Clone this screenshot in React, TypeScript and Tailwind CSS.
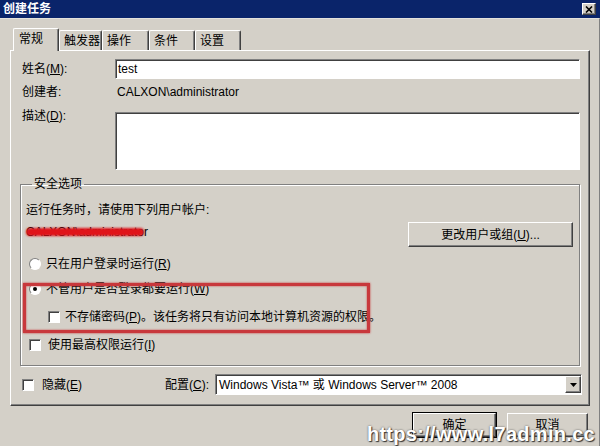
import React from "react"

// classic win2k 3d borders
const raised =
  "border border-t-white border-l-white border-r-[#404040] border-b-[#404040] shadow-[inset_-1px_-1px_#808080]"
const sunken =
  "border border-t-[#808080] border-l-[#808080] border-r-white border-b-white shadow-[inset_1px_1px_#404040]"

const tabs = [
  { label: "常规", w: "w-[46px]", active: true },
  { label: "触发器", w: "w-[43px]" },
  { label: "操作", w: "w-[47px]" },
  { label: "条件", w: "w-[46px]" },
  { label: "设置", w: "w-[46px]" },
]

const Check = () => <span className={`h-[12px] w-[12px] shrink-0 bg-white ${sunken}`} />

const Radio = ({ on }: { on?: boolean }) => (
  <span className="flex h-[12px] w-[12px] shrink-0 items-center justify-center rounded-full border border-t-[#808080] border-l-[#808080] border-r-white border-b-white bg-white">
    {on && <span className="h-[4px] w-[4px] rounded-full bg-black" />}
  </span>
)

const TitleBar = () => (
  <div className="flex h-[18px] w-full shrink-0 items-center justify-between bg-[#0a246a] pl-[3px] pr-[4px]">
    <span className="text-[12px] font-bold text-white">创建任务</span>
    <span className={`flex h-[12px] w-[14px] items-center justify-center bg-[#d4d0c8] ${raised}`}>
      <svg width="8" height="7" viewBox="0 0 8 7">
        <path d="M1 0.5 L7 6.5 M7 0.5 L1 6.5" stroke="#000" strokeWidth="1.6" />
      </svg>
    </span>
  </div>
)

const Tabs = () => (
  <div className="flex h-[31px] shrink-0 items-end pl-[13px]">
    {tabs.map((t) => (
      <div
        key={t.label}
        className={`${t.w} flex items-center whitespace-nowrap rounded-t-[2px] border border-b-0 border-t-white border-l-white border-r-[#404040] bg-[#d4d0c8] pl-[4px] shadow-[inset_-1px_0_#808080] ${
          t.active ? "relative z-10 -mb-px h-[23px] pb-[2px] pl-[5px]" : "h-[20px]"
        }`}
      >
        {t.label}
      </div>
    ))}
  </div>
)

const Panel = () => (
  <div className={`mx-[10px] flex h-[356px] w-[580px] flex-col pl-[11px] ${raised}`}>
    <div className="mt-[8px] flex items-center">
      <span className="w-[93px]">
        姓名(<u>M</u>):
      </span>
      <div className={`flex h-[20px] w-[465px] items-center bg-white pl-[2px] ${sunken}`}>test</div>
    </div>
    <div className="mt-[3px] flex h-[20px] items-center">
      <span className="w-[95px]">创建者:</span>
      <span>CALXON\administrator</span>
    </div>
    <div className="mt-[10px] flex items-start">
      <span className="-mt-[4px] w-[93px]">
        描述(<u>D</u>):
      </span>
      <div className={`h-[58px] w-[465px] bg-white ${sunken}`} />
    </div>

    <fieldset className="mt-[6px] -ml-[2px] h-[190px] w-[560px] border border-[#808080] pl-[5px] pr-[6px] shadow-[inset_1px_1px_white,1px_1px_white]">
      <legend className="ml-[6px] px-[2px]">安全选项</legend>
      <div className="mt-[10px]">运行任务时，请使用下列用户帐户:</div>
      <div className="mt-[4px] flex items-start justify-between">
        <span className="relative mt-[2px]">
          CALXON\administrator
          <span className="absolute left-[0px] top-[4px] h-[8px] w-[118px] rounded-full bg-[#e0141a] blur-[0.8px]" />
        </span>
        <button className={`h-[25px] w-[165px] bg-[#d4d0c8] ${raised}`}>
          更改用户或组(<u>U</u>)...
        </button>
      </div>
      <div className="mt-[9px] flex items-center gap-[5px] pl-[3px]">
        <Radio />
        <span>只在用户登录时运行(<u>R</u>)</span>
      </div>
      <div className="relative">
        <div className="pointer-events-none absolute -left-[3px] top-[2px] h-[50px] w-[347px] border-[3px] border-[#c8383c] shadow-[0_0_2px_#c8383c,inset_0_0_2px_#c8383c]" />
        <div className="mt-[9px] flex items-center gap-[5px] pl-[3px]">
          <Radio on />
          <span>不管用户是否登录都要运行(<u>W</u>)</span>
        </div>
        <div className="mt-[12px] flex items-center gap-[5px] pl-[22px]">
          <Check />
          <span>
            不存储密码(<u>P</u>)。该任务将只有访问本地计算机资源的权限。
          </span>
        </div>
      </div>
      <div className="mt-[12px] flex items-center gap-[7px] pl-[3px]">
        <Check />
        <span>使用最高权限运行(<u>I</u>)</span>
      </div>
    </fieldset>

    <div className="mt-[8px] flex items-center">
      <Check />
      <span className="ml-[8px] w-[123px]">
        隐藏(<u>E</u>)
      </span>
      <span className="w-[50px]">
        配置(<u>C</u>):
      </span>
      <div className={`flex h-[21px] w-[367px] items-center justify-between bg-white pl-[3px] ${sunken}`}>
        <span>Windows Vista™ 或 Windows Server™ 2008</span>
        <span className={`flex h-[17px] w-[16px] items-center justify-center bg-[#d4d0c8] ${raised}`}>
          <svg width="7" height="4" viewBox="0 0 7 4">
            <path d="M0 0 H7 L3.5 4 Z" fill="#000" />
          </svg>
        </span>
      </div>
    </div>
  </div>
)

const Buttons = () => (
  <div className="flex justify-end gap-[11px] pr-[11px] pt-[7px]">
    <button className={`h-[24px] w-[83px] bg-[#d4d0c8] outline outline-1 outline-black ${raised}`}>确定</button>
    <button className={`h-[24px] w-[81px] bg-[#d4d0c8] ${raised}`}>取消</button>
  </div>
)

export default function App() {
  return (
    <div className="relative flex h-[446px] w-[600px] flex-col overflow-hidden bg-[#d4d0c8] font-['Liberation_Sans','Noto_Sans_CJK_SC',sans-serif] text-[12px] leading-[16px] text-black">
      <TitleBar />
      <div className="flex flex-1 flex-col border-r border-t border-r-[#808080] border-t-[#e4e2dc]">
        <Tabs />
        <Panel />
        <Buttons />
      </div>
      <span className="absolute bottom-[1px] right-[5px] font-['Liberation_Sans',sans-serif] text-[20px] leading-[22px] font-bold tracking-[0.3px] text-white [text-shadow:1px_1px_1px_#333,0_0_2px_#555]">
        https://www.l7admin.cc
      </span>
    </div>
  )
}
